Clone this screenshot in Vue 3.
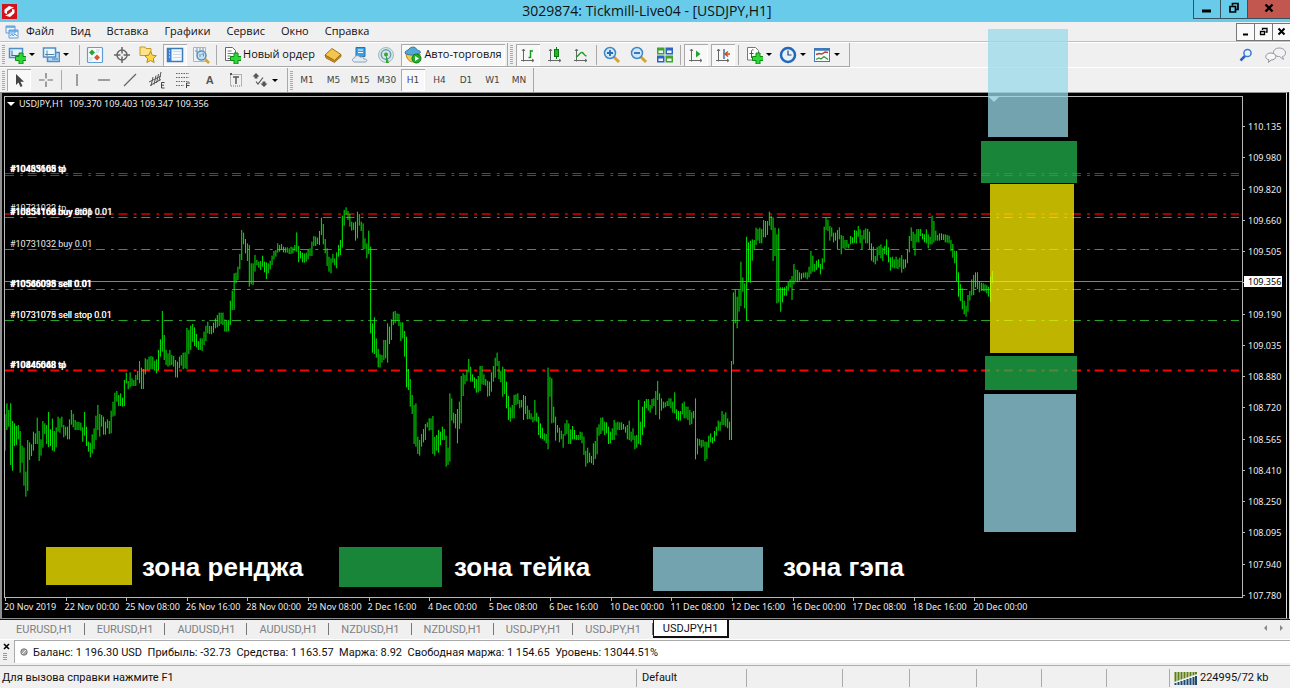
<script setup>
import { computed } from 'vue'

const menus = ['Файл', 'Вид', 'Вставка', 'Графики', 'Сервис', 'Окно', 'Справка']
const frames = ['M1', 'M5', 'M15', 'M30', 'H1', 'H4', 'D1', 'W1', 'MN']
const tabs = ['EURUSD,H1', 'EURUSD,H1', 'AUDUSD,H1', 'AUDUSD,H1', 'NZDUSD,H1', 'NZDUSD,H1', 'USDJPY,H1', 'USDJPY,H1', 'USDJPY,H1']
const prices = ['110.135', '109.980', '109.820', '109.660', '109.505', '', '109.190', '109.035', '108.880', '108.720', '108.565', '108.410', '108.250', '108.095', '107.940', '107.780']
const times = ['20 Nov 2019', '22 Nov 00:00', '25 Nov 08:00', '26 Nov 16:00', '28 Nov 00:00', '29 Nov 08:00', '2 Dec 16:00', '4 Dec 00:00', '5 Dec 08:00', '6 Dec 16:00', '10 Dec 00:00', '11 Dec 08:00', '12 Dec 16:00', '16 Dec 00:00', '17 Dec 08:00', '18 Dec 16:00', '20 Dec 00:00']

const plus = '<path d="M11 7h4v3.500h3.500v4h-3.500v3.500h-4v-3.500h-3.500v-4h3.500z" fill="#2fd83a" stroke="#0b8a14"/>'
const axes = '<path d="M4.500 3v12.500M2 14.500h13M3 5l1.500-2 1.500 2M13 13l2 1.500-2 1.500" fill="none" stroke="#666"/>'
const icons = {
  newchart: '<path d="M1.500 2.500h13v9h-13z" fill="#e3f1fc" stroke="#4a90cc" stroke-width="1.500"/><path d="M4 4.500v5.500M3.500 9.500h8" stroke="#3c6f9c" fill="none"/>' + plus,
  profiles: '<path d="M5.500 6.500h12v9h-12z" fill="#b9d8f2" stroke="#4a90cc" stroke-width="1.500"/><path d="M1.500 2h12v9h-12z" fill="#f0f8ff" stroke="#4a90cc" stroke-width="1.500"/><path d="M3 8.500h9M5 4.500v5.500" stroke="#5a7f9f"/><path d="M10 13h6" stroke="#3c7ab8"/>',
  market: '<rect x="1.500" y="1.500" width="15" height="15" rx="1" fill="#f7fbff" stroke="#5d9fd6" stroke-width="1.200"/><path d="M6 3.500l3 3-3 3-3-3z" fill="#27a537"/><path d="M11 8.500l3 3-3 3-3-3z" fill="#e2532b"/><path d="M10 4h4M10 6h3M3 12h4M3 14h3" stroke="#c5d6e5"/>',
  target: '<circle cx="9" cy="9" r="5" fill="none" stroke="#666" stroke-width="1.500"/><path d="M9 1v6.500M9 10.500v6.500M1 9h6.500M10.500 9h6.500" stroke="#666" stroke-width="1.500"/>',
  favs: '<path d="M1 2v-1h5l1 1.500h5v7h-11z" fill="#ffe28a" stroke="#c59a2c"/><path d="M11.500 5.500l1.800 3.700 4 .5-3 2.800.8 4-3.600-2-3.600 2 .8-4-3-2.800 4-.5z" fill="#ffd84a" stroke="#b98a18"/>',
  nav: '<rect x="1.500" y="2.500" width="15" height="13" fill="#f4faff" stroke="#3c7ab8" stroke-width="1.500"/><path d="M2 3h3.500v12h-3.500z" fill="#3f7fd0"/><path d="M7 5.500h8M7 8.500h8M7 11.500h8" stroke="#cbd9e6"/><path d="M3 5h1M3 8h1M3 11h1" stroke="#fff"/>',
  tester: '<path d="M1.500 1.500h12v14h-12z" fill="#eef3f6" stroke="#a9b6c0"/><path d="M3 5h2v3M5 2v4M8 2v3M11 2v3" fill="none" stroke="#7895ad"/><circle cx="9.500" cy="9.500" r="4.500" fill="#b9dcf3" fill-opacity=".8" stroke="#5c8fb8" stroke-width="1.500"/><path d="M8 11v-3M9.500 8.500l2-1v3" stroke="#6a93b6" fill="none"/><path d="M13 13l4 4" stroke="#d9a32c" stroke-width="2.500"/>',
  order: '<path d="M2.500 1.500h7l3 3v10h-10z" fill="#fff" stroke="#666"/><path d="M4.500 5h4M4.500 7.500h6M4.500 10h3M4.500 12.500h3" stroke="#777"/>' + plus,
  book: '<path d="M1 9l7-6.500 9 6-6.500 6z" fill="#f2c64c" stroke="#a87415"/><path d="M1 9l1 3 8.500 4.500 6.500-6v-2l-6.500 6z" fill="#c98f22" stroke="#946410" stroke-width=".8"/>',
  hosting: '<path d="M5 1.500h9v9h-9z" fill="#38a0e4" stroke="#1b75b7"/><path d="M7 4h5M7 6.500h5" stroke="#fff" stroke-width="1.200"/><path d="M3.500 16c-3-.5-2.500-4 0-4 .5-3 4.500-3 5.500-.8 2-1 4 .3 3.700 1.800 4-.5 4 3 1.300 3z" fill="#e4ebf2" stroke="#8da2b5"/>',
  signal: '<circle cx="9" cy="9" r="7.500" fill="#d9e8e4" stroke="#9dbdb5"/><circle cx="9" cy="8.500" r="4.700" fill="none" stroke="#6c9cc0" stroke-width="1.500"/><path d="M9 8.500l3 8.500h-3z" fill="#36a339"/><circle cx="9" cy="8.500" r="2" fill="#36a339"/>',
  auto: '<path d="M2 8c1 9 9 10 13 5l1-5z" fill="#f3c84b" stroke="#b58a20"/><path d="M1 7c0-3 3-2 4-4 2-2.500 6-2.500 7.500 0 .5 2 4 1 4 3.500-3 3-12 3.500-15.500.5z" fill="#54a8d8" stroke="#2c79ac"/><circle cx="12.500" cy="12.500" r="4.500" fill="#1fb02c" stroke="#0e7d18"/><path d="M11 10l4 2.500-4 2.500z" fill="#fff"/>',
  bars: axes + '<path d="M11.500 4v8M9.500 11.500h2M11.500 5h2.500" fill="none" stroke="#1a9a25" stroke-width="1.500"/>',
  candles: axes + '<path d="M10.500 1v12" stroke="#0b7a12"/><rect x="8.500" y="3.500" width="4" height="7" fill="#1fb52c" stroke="#0b7a12"/>',
  line: axes + '<path d="M4 11c3-1 4-5 6-4.500 2 .5 2 3 4.500 3.500" fill="none" stroke="#1a9a25" stroke-width="1.300"/>',
  zoomin: '<path d="M10.500 10.500l5.500 5.500" stroke="#d6a32d" stroke-width="3"/><circle cx="7" cy="7" r="5.500" fill="#cfe9fb" stroke="#3f87c6" stroke-width="1.500"/><path d="M4 7h6M7 4v6" stroke="#2a6db0" stroke-width="1.800"/>',
  zoomout: '<path d="M10.500 10.500l5.500 5.500" stroke="#d6a32d" stroke-width="3"/><circle cx="7" cy="7" r="5.500" fill="#cfe9fb" stroke="#3f87c6" stroke-width="1.500"/><path d="M4 7h6" stroke="#2a6db0" stroke-width="1.800"/>',
  tiles: '<path d="M1 1.500h7.500v7h-7.500zM9.500 9.500h7.500v7h-7.500z" fill="#41a52c"/><path d="M9.500 1.500h7.500v7h-7.500zM1 9.500h7.500v7h-7.500z" fill="#2c62c4"/><path d="M2.500 4.500h4.500v2.500h-4.500zM11 4.500h4.500v2.500h-4.500zM2.500 12.500h4.500v2.500h-4.500zM11 12.500h4.500v2.500h-4.500z" fill="#e8f4fc"/>',
  scroll: axes + '<path d="M9 4.500l4.500 3.500-4.500 3.500z" fill="#1fa52b"/>',
  shift: axes + '<path d="M10 3v10" stroke="#3877b3" stroke-width="1.500"/><path d="M16 8h-4M14 5.500l-3 2.500 3 2.500" stroke="#d14a20" stroke-width="1.500" fill="none"/>',
  indicators: '<path d="M2.500 1.500h8l3 3v9.500h-11z" fill="#fff" stroke="#777"/><path d="M8.500 4c-2-.8-2 1-2 2v6M4.500 7.500h4" fill="none" stroke="#555"/>' + plus,
  clock: '<circle cx="9" cy="9" r="7" fill="#e4f2fc" stroke="#2169b8" stroke-width="2.500"/><path d="M9 4.500v4.500h3.500" fill="none" stroke="#345" stroke-width="1.200"/>',
  template: '<rect x="1.500" y="2.500" width="15" height="13" fill="#f7fbff" stroke="#3c7ab8"/><path d="M1.500 3.500h15" stroke="#3c7ab8" stroke-width="2.500"/><path d="M3 8.500l3-1 3 .5 3-2 3 .5" fill="none" stroke="#b2432e" stroke-width="1.500"/><path d="M3 13.500l3-1.500 2 1 3-2.500 4 3" fill="none" stroke="#2f9b39" stroke-width="1.300"/>',
  arrow: '<path d="M6 3v11l2.500-2.500 2 4.500 2-1-2-4.300h3.500z" fill="#444"/>',
  cross: '<path d="M9 2v5.500M9 10.500v5.500M2 9h5.500M10.500 9h5.500" stroke="#666" stroke-width="1.200"/>',
  vline: '<path d="M9 3v12" stroke="#666" stroke-width="1.200"/>',
  hline: '<path d="M3 9h12" stroke="#666" stroke-width="1.200"/>',
  trend: '<path d="M3 15l12-12" stroke="#666" stroke-width="1.200"/>',
  channel: '<path d="M1 11l12-6M2 14.500l11-6M5 6l-2 9M8 4.500l-2 9M10.500 3l-2 9M13 1l-2 9" stroke="#555"/><path d="M16.500 11.500h-3v5.500h3M13.500 14.200h2.500" fill="none" stroke="#444"/>',
  fibo: '<path d="M2 2.500h13M2 6.500h13M2 10.500h13M2 14.500h8" stroke="#666" stroke-dasharray="1.500 1"/><path d="M12.500 17v-5h3.500M12.500 14.500h3" fill="none" stroke="#444"/>',
  label: '<rect x="3.500" y="3.500" width="11" height="11.500" fill="none" stroke="#777" stroke-dasharray="1 1"/><path d="M6 6h6M9 6v7" stroke="#555" stroke-width="1.500"/><path d="M3 3h2" stroke="#555" stroke-width="2"/>',
  shapes: '<path d="M5 2l3.500 3.500h-2v2h-3v-2h-2z" fill="#555"/><path d="M5 10.500l2 2.500 5-6.500" fill="none" stroke="#555" stroke-width="1.200"/><path d="M13 16l-3.500-3.500h2v-2h3v2h2z" fill="#555"/>'
}

const group = (w, items) => ({ w, items: items.map(([icon, label, opt = '']) => ({ icon, label, drop: opt.includes('d'), on: opt.includes('p'), text: opt.includes('t') })) })
const mainBar = [
  [
    group('w68', [['newchart', 'Новый график', 'd'], ['profiles', 'Профили', 'd']]),
    group('w130', [['market', 'Обзор рынка'], ['target', 'Окно данных'], ['favs', 'Избранное'], ['nav', 'Навигатор', 'p'], ['tester', 'Тестер стратегий']]),
    group('w285', [['order', 'Новый ордер', 't'], ['book', 'MetaEditor'], ['hosting', 'Хостинг'], ['signal', 'Сигналы'], ['auto', 'Авто-торговля', 'tp']])
  ],
  [
    group('w77', [['bars', 'Бары', 'p'], ['candles', 'Свечи'], ['line', 'Линия']]),
    group('w77', [['zoomin', 'Увеличить'], ['zoomout', 'Уменьшить'], ['tiles', 'Окна мозаикой']]),
    group('w51', [['scroll', 'Автопрокрутка', 'p'], ['shift', 'Сдвиг графика', 'p']]),
    group('w105', [['indicators', 'Индикаторы', 'd'], ['clock', 'Периоды', 'd'], ['template', 'Шаблоны', 'd']])
  ]
]
const drawBar = [
  group('w51', [['arrow', 'Курсор', 'p'], ['cross', 'Перекрестие']]),
  group('w220', [['vline', 'Вертикальная линия'], ['hline', 'Горизонтальная линия'], ['trend', 'Трендовая линия'], ['channel', 'Канал'], ['fibo', 'Фибоначчи'], ['A', 'Текст'], ['label', 'Метка'], ['shapes', 'Стрелки', 'd']])
]

const levels = [
  { y: 76.5, c: 'red' }, { y: 78.5, c: 'red' }, { y: 117, c: 'dark' }, { y: 120.5, c: 'green' },
  { y: 152.5, c: 'green' }, { y: 192.5, c: 'green' }, { y: 223.5, c: 'green' }, { y: 273.5, c: 'bright' }
]
const notes = [
  { k: 'n1', t: ['#10435665 sl', '#10463108 tp'] },
  { k: 'n2', t: ['#10731032 tp'] },
  { k: 'n3', t: ['#10851160 buy stop 0.01', '#10854168 buy 0.01'] },
  { k: 'n4', t: ['#10731032 buy 0.01'] },
  { k: 'n5', t: ['#10546035 sell 0.01', '#10566098 sell 0.01'] },
  { k: 'n6', t: ['#10731078 sell stop 0.01', '#10731075 sell stop 0.01'] },
  { k: 'n7', t: ['#10445668 tp', '#10846048 sl'] }
]

/* Hourly high/low pairs in thirds of a pixel; x runs evenly between from and to. */
const runs = [
  { from: 0, to: 671, y: 609, d: [342,452,310,390,330,380,310,495,363,512,370,438,378,435,375,418,393,518,437,488,443,557,515,590,420,573,427,480,433,468,395,452,400,432,353,432,393,483,418,467,363,443,370,402,375,432,336,441,388,438,356,452,393,455,382,442,350,395,355,398,350,382,375,412,380,407,380,418,358,418,330,374,342,382,360,390,365,390,366,390,368,392,382,425,336,407,380,438,425,455,428,472,403,460,385,447,347,420,315,390,342,410,345,380,350,404,365,404,358,385,363,402,332,400,305,350,278,347,273,305,285,318,280,318,293,320,240,318,218,250,243,268,217,262,235,258,240,258,225,258,213,240,183,250,203,267,207,267,175,223,178,210,170,210,168,208,170,208,182,212,178,220,150,210,118,170,33,155,105,180,150,195,160,200,150,197,165,195,168,200,180,232,185,233,170,205,165,197,158,208,157,205,84,207,90,162,77,150,72,125,82,138,102,142,123,150,115,150,115,153,95,135,77,123,65,100,78,102,78,103,68,98,55,85,45,82,38,78,38,72,38,75,58,95,62,95,60,93] },
  { from: 676, to: 972, y: -21, d: [632,705,602,660,550,660,548,580,530,570,492,538,420,510,428,463,447,490,460,513,465,590,520,583,520,585,495,545,510,525,515,533,513,540,497,530,515,547,517,567,520,550,512,538,497,525,483,508,480,500,460,488,465,485,462,480,470,487,472,488,472,488,475,492,470,492,472,490,465,482,427,485,468,517,483,505,488,517,490,518,488,515,478,508,475,498,455,498,438,468,440,468,443,462,423,465,383,435,402,463,447,490,475,528,500,545] },
  { from: 978, to: 1901, y: 249, d: [235,280,222,248,235,256,217,265,195,230,180,225,107,203,90,137,82,105,93,120,102,140,125,152,128,150,125,182,95,175,102,137,125,153,130,208,175,207,190,235,152,222,200,460,430,518,412,522,475,533,507,562,523,562,525,548,480,540,480,535,430,548,440,492,418,480,395,435,393,430,400,423,402,438,427,483,427,475,453,530,470,622,567,630,597,680,645,702,675,792,670,800,770,822,780,827,762,800,747,787,732,780,727,742,715,752,715,750,708,822,770,827,765,812,750,818,755,795,740,780,747,780,767,860,803,855,640,845,655,722,698,730,702,745,687,790,665,747,588,730,580,648,585,613,570,603,537,577,560,605,583,605,592,625,597,638,588,637,558,633,558,613,583,615,597,617,602,650,605,648,577,635,558,605,533,593,518,558,543,597,572,607,560,650,567,642,605,685,648,720,682,725,675,715,645,715,643,675,640,672,660,685,660,682,645,720,648,702,677,718,690,717,700,718,710,727,660,722,698,725,710,765,730,775,743,777,760,782,762,790,563,808,590,650,595,730,680,728,710,782,735,758,743,787,752,778,762,803,730,767,720,762,730,792,748,792,738,778,750,778,765,780,765,780,755,780,757,790,770,825,812,860,803,850,818,847,828,850,790,855,783,837,742,823,733,767,713,762,712,752,725,765,727,760,740,792,755,790,745,780,720,780,728,765,725,750,727,750,727,750,732,748,740,758,735,778,722,780,755,785,745,780,767,808,765,803,660,792] },
  { from: 1907, to: 2923, y: 249, d: [725,795,680,765,663,742,657,685,657,692,675,698,657,685,655,678,633,705,603,660,640,718,655,692,665,685,667,682,663,678,655,678,655,685,665,698,637,700,688,718,693,722,693,722,670,703,665,715,680,715,680,720,690,735,697,732,693,715,655,838,775,823,777,797,780,803,780,800,785,843,785,837,767,803,760,787,772,790,753,783,740,767,722,752,725,752,693,735,703,735,697,740,715,745,725,780,543,780,337,553,328,430,350,445,330,395,245,378,292,335,310,385,170,423,187,303,182,308,178,242,180,210,143,195,147,182,143,190,147,190,120,172,123,172,123,165,95,137,107,150,112,243,143,228,163,370,145,367,322,395,322,367,322,347,318,347,303,332,298,322,288,360,252,313,268,303,270,307,277,302,280,298,278,293,277,293,277,298,260,292,213,282,227,275,252,275,242,270,238,263,252,283,235,267,140,247,112,150,120,153,138,182,142,170,158,187,158,182,150,208,142,178,165,223,168,205,180,208,180,203,192,205,168,193,172,190,150,188,152,190,138,170,148,190,165,207,150,178,145,190,147,190,155,208,190,242,200,247,228,253,202,243,198,225,193,235,203,243,198,222,178,225,202,247,232,272,230,262,238,265,230,265,238,267,233,262,225,278,238,267,238,263,210,250,168,217,142,183,155,205,162,227,147,187,147,187,147,168,160,178,163,187,148,190,163,205,170,193,107,193,123,187,152,182,165,182,160,182,160,180,163,180,163,187,165,188,167,190,180,213,192,233,212,250,213,303,277,350,312,363,325,388,362,403,377,410,345,395,333,362,298,347,285,345,277,322,277,327,303,337] },
  { from: 2929, to: 2962, y: 99, d: [458,483,460,483,463,485,466,490,470,500,440,515,423,460] }
]
const barPath = computed(() => runs.map(r => {
  const n = r.d.length / 2
  let p = ''
  for (let i = 0; i < n; i++) {
    const x = r.from + (r.to - r.from) * i / (n - 1)
    p += `M${x.toFixed(1)} ${r.d[2 * i] + r.y}V${r.d[2 * i + 1] + r.y}`
  }
  return p
}).join(''))
</script>

<template>
  <div class="app">
    <header class="title">
      <svg class="logo" width="15" height="15" viewBox="0 0 15 15"><path d="M0 0h15v15H0z" fill="#d3121c" /><path d="M2.500 9V5.500L7 2l5 1.500L8.500 5 5 7.500V10zM12.500 5.500V9L8 13l-5-1.500L6.500 10 10 7.500V5z" fill="#fff" /></svg>
      <h1>3029874: Tickmill-Live04 - [USDJPY,H1]</h1>
      <div class="winbtns">
        <button aria-label="Свернуть"><svg width="12" height="12"><path d="M1 9h9" stroke="#000" stroke-width="3" /></svg></button>
        <button aria-label="Восстановить"><svg width="12" height="12"><path d="M2 4.500h5.500v5.500H2zM4.500 3.500V1.500h5.500v6H8" fill="none" stroke="#000" stroke-width="1.700" /></svg></button>
        <button class="close" aria-label="Закрыть"><svg width="12" height="12"><path d="M2.500 2.500l7 7M9.500 2.500l-7 7" stroke="#000" stroke-width="2.400" /></svg></button>
      </div>
    </header>

    <nav class="menu">
      <svg width="14" height="14" viewBox="0 0 14 14"><path d="M1 1h9v7H1zM4 5h9v8H4z" fill="#eaf4fc" stroke="#5a9fe0" /><path d="M1 2h9M4 6h9" stroke="#5a9fe0" stroke-width="1.500" /><path d="M5 11l2-2 1 2 2-2 2 2" fill="none" stroke="#5a9fe0" /></svg>
      <button v-for="m in menus" :key="m">{{ m }}</button>
      <div class="mdi">
        <button aria-label="Свернуть график"><svg width="9" height="9"><path d="M2 7.500h5" stroke="#000" stroke-width="2" /></svg></button>
        <button aria-label="Восстановить график"><svg width="9" height="9"><path d="M1.500 4.500h4v3h-4zM3.500 3V1.500H8v3.500H6.500" fill="none" stroke="#000" stroke-width="1.300" /></svg></button>
        <button aria-label="Закрыть график"><svg width="9" height="9"><path d="M1.500 1.500l6 6M7.500 1.500l-6 6" stroke="#000" stroke-width="2" /></svg></button>
      </div>
    </nav>

    <div class="bar">
      <div v-for="(part, pi) in mainBar" :key="pi" class="part">
        <i class="grip"></i>
        <template v-for="(g, gi) in part" :key="gi">
          <i v-if="gi" class="sep"></i>
          <div class="group" :class="g.w">
            <button v-for="b in g.items" :key="b.icon" :class="{ on: b.on, drop: b.drop, text: b.text }" :aria-label="b.label">
              <svg width="18" height="18" viewBox="0 0 18 18" v-html="icons[b.icon]"></svg>
              <span v-if="b.text">{{ b.label }}</span>
              <i v-if="b.drop" class="caret"></i>
            </button>
          </div>
        </template>
      </div>
      <div class="right">
        <button aria-label="Поиск"><svg width="14" height="14" viewBox="0 0 14 14"><path d="M1.500 12.500l5-5" stroke="#2c62c4" stroke-width="2.500" /><circle cx="8.500" cy="5" r="3.600" fill="#e9f3fc" stroke="#3d78d6" stroke-width="1.500" /></svg></button>
        <button aria-label="Сообщения"><svg width="21" height="16" viewBox="0 0 21 16"><path d="M14 1c8 0 8 8 3.500 8.500l1 3-4-3C6 9.500 7 1 14 1z" fill="#f2f2f4" stroke="#9a9aa2" /><path d="M6 6c6.500 0 6.500 7 0 7l-2.500 2.500.3-2.800C-1 12 0 6 6 6z" fill="#f7f7f9" stroke="#8e8e96" /></svg></button>
      </div>
    </div>

    <div class="bar second">
      <div class="part">
        <i class="grip"></i>
        <template v-for="(g, gi) in drawBar" :key="gi">
          <i v-if="gi" class="sep"></i>
          <div class="group" :class="g.w">
            <button v-for="b in g.items" :key="b.icon" :class="{ on: b.on, drop: b.drop }" :aria-label="b.label">
              <b v-if="b.icon === 'A'" class="letter">A</b>
              <svg v-else width="18" height="18" viewBox="0 0 18 18" v-html="icons[b.icon]"></svg>
              <i v-if="b.drop" class="caret"></i>
            </button>
          </div>
        </template>
      </div>
      <div class="part">
        <i class="grip"></i>
        <div class="group w236">
          <button v-for="f in frames" :key="f" class="frame" :class="{ on: f === 'H1' }">{{ f }}</button>
        </div>
      </div>
    </div>

    <main class="stage">
      <div class="plot">
        <svg class="canvas" width="100%" height="100%">
          <line class="price" x1="0" x2="100%" y1="184.500" y2="184.500" />
          <line v-for="l in levels" :key="l.y" class="level" :class="l.c" x1="0" x2="1234" :y1="l.y" :y2="l.y" />
          <path class="bars" transform="scale(0.33333)" :d="barPath" />
        </svg>
        <p class="quote"><i></i><span>USDJPY,H1&nbsp; 109.370 109.403 109.347 109.356</span></p>
        <div v-for="n in notes" :key="n.k" class="note" :class="n.k"><span v-for="t in n.t" :key="t">{{ t }}</span></div>
        <i class="marker"></i>
        <div class="zone gap z1"></div>
        <div class="zone take z2"></div>
        <div class="zone range z3"></div>
        <div class="zone take z4"></div>
        <div class="zone gap z5"></div>
        <div class="zone range k1"></div><strong class="t1">зона ренджа</strong>
        <div class="zone take k2"></div><strong class="t2">зона тейка</strong>
        <div class="zone gap k3"></div><strong class="t3">зона гэпа</strong>
      </div>
      <div class="prices">
        <span v-for="(p, i) in prices" :key="i">{{ p }}</span>
        <b>109.356</b>
      </div>
      <div class="times"><span v-for="t in times" :key="t">{{ t }}</span></div>
    </main>

    <div class="tabs">
      <button v-for="(t, i) in tabs" :key="i" :class="{ active: i === 8 }">{{ t }}</button>
      <div class="scrollers"><i class="l"></i><i class="r"></i></div>
    </div>

    <section class="account">
      <div class="side">
        <button aria-label="Закрыть терминал"><svg width="7" height="7"><path d="M1 1l5 5M6 1l-5 5" stroke="#000" stroke-width="1.600" /></svg></button>
        <i></i>
      </div>
      <div class="balance"><svg width="8" height="8"><circle cx="4" cy="4" r="3.200" fill="#aaa" stroke="#777" /><path d="M2 6l4-4" stroke="#eee" /></svg><span>Баланс: 1 196.30 USD&nbsp; Прибыль: -32.73&nbsp; Средства: 1 163.57&nbsp; Маржа: 8.92&nbsp; Свободная маржа: 1 154.65&nbsp; Уровень: 13044.51%</span></div>
    </section>

    <footer class="status">
      <span class="help">Для вызова справки нажмите F1</span>
      <span class="c110">Default</span><span class="c96"></span><span class="c67"></span><span class="c67"></span><span class="c65"></span><span class="c65"></span><span class="c63"></span>
      <span class="traffic">
        <svg width="23" height="13" viewBox="0 0 23 13"><path d="M1.500 0v13M4.500 0v13M7.500 0v13M10.500 0v13M13.500 0v13M16.500 0v13M19.500 0v13M22 0v13" stroke="#5f7f12" stroke-width="2" /><path d="M0 13V10L23 2v11z" fill="#efefef" /><path d="M1.500 11v2M4.500 10v3M7.500 9v4M10.500 8v5M13.500 7v6M16.500 6v7M19.500 5v8M22 4v9" stroke="#1c4a72" stroke-width="2" /></svg>
        224995/72 kb
      </span>
    </footer>
  </div>
</template>

<style>
body { margin: 0; overflow: hidden; }
</style>

<style scoped>
.app { display: flex; flex-direction: column; height: 100vh; background: #f0f0f0; color: #111; font: 11px "Open Sans", "Noto Sans", sans-serif; overflow: hidden; }
* { box-sizing: border-box; }
button { border: 0; padding: 0; margin: 0; background: none; font: inherit; color: inherit; display: flex; align-items: center; justify-content: center; white-space: nowrap; }
svg { display: block; flex: none; }
i { font-style: normal; }

.title { display: flex; align-items: center; position: relative; height: 22px; flex: none; background: #68cbea; }
.logo { margin-left: 2px; }
h1 { flex: 1; margin: 0; text-align: center; font-size: 14px; font-weight: 400; line-height: 22px; padding-left: 84px; }
.winbtns { display: flex; align-self: flex-start; height: 19px; }
.winbtns button { width: 27px; border: 1px solid #35545f; border-top: 0; border-right: 0; padding-bottom: 2px; }
.winbtns .close { width: 43px; background: #c2574f; }

.menu { display: flex; align-items: center; flex: none; height: 20px; padding-left: 5px; border-bottom: 1px solid #c0c0c0; }
.menu > button { height: 18px; margin-left: 16px; padding-bottom: 2px; }
.menu > svg { margin-right: -9px; }
.mdi { display: flex; margin-left: auto; height: 18px; }
.mdi button { width: 19px; border: 1px solid #777; margin-right: -1px; background: #fafafa; }

.bar { display: flex; flex: none; height: 25px; border-top: 1px solid #fff; }
.part { display: flex; align-items: center; padding: 0 2px; border-right: 1px solid #a8a8a8; border-bottom: 1px solid #a8a8a8; }
.second .part { border-bottom: 0; }
.grip { width: 3px; height: 19px; margin-right: 3px; background: repeating-linear-gradient(#aaa 0 1px, #f0f0f0 1px 2px); }
.second .grip { margin-right: 2px; }
.sep { width: 1px; height: 20px; margin: 0 3px; background: #aaa; }
.group { display: flex; justify-content: space-between; height: 22px; }
.w68 { width: 68px; } .w130 { width: 130px; } .w285 { width: 285px; } .w77 { width: 77px; }
.w51 { width: 51px; } .w105 { width: 105px; padding-left: 3px; } .w220 { width: 220px; } .w236 { width: 236px; }
.group button { width: 24px; height: 22px; }
.group .text { width: 98px; gap: 2px; }
.group .text span { padding-bottom: 2px; }
.group .text.on { width: 104px; }
.group .drop { width: 34px; justify-content: flex-start; gap: 3px; }
.group .on { background: #f8f8f8; box-shadow: inset 1px 1px #aaa, inset -1px -1px #fff; }
.caret { width: 0; border: 3px solid transparent; border-top-color: #000; border-bottom: 0; }
.letter { font: bold 11px "Liberation Sans", sans-serif; color: #555; }
.group .frame { font: 9px "DejaVu Sans", sans-serif; color: #444; }
.right { display: flex; align-items: center; gap: 12px; margin-left: auto; padding-right: 4px; }

.stage { flex: 1; min-height: 0; display: grid; grid-template: 1fr 19px / minmax(0, 1fr) 43px; padding: 3px 0 1px 2px; background: #000; border: solid #909090; border-width: 1px 4px 1px 2px; border-right: 4px double #ddd; color: #ececec; font: 9px/11px "Noto Sans", sans-serif; }
.plot { position: relative; border: 1px solid #b8b8b8; min-width: 0; }
.canvas { position: absolute; inset: 0; overflow: hidden; }
.bars { stroke: #0f0; stroke-width: 2.800; fill: none; }
.price { stroke: #7a8296; }
.level { stroke-dasharray: 9 6.200 2.800 4.700; stroke-width: 1; }
.red { stroke: #f00; } .dark { stroke: #a00000; stroke-width: 2; } .green { stroke: #28a428; } .bright { stroke: #f00; stroke-width: 2; }
.quote { position: absolute; left: 2px; top: 1px; margin: 0; display: flex; align-items: center; gap: 4px; }
.quote i { border: 4px solid transparent; border-top-color: #fff; border-bottom: 0; }
.note { position: absolute; left: 5px; display: grid; white-space: nowrap; font-family: Roboto, sans-serif; }
.note span { grid-area: 1 / 1; }
.n1 { top: 67px; } .n2 { top: 106px; } .n3 { top: 110px; } .n4 { top: 142px; } .n5 { top: 182px; } .n6 { top: 213px; } .n7 { top: 263px; }
.n1, .n3, .n5, .n7 { color: #fff; text-shadow: 0 0 1px #fff; }
.marker { position: absolute; left: 984px; top: 0; border: 5px solid transparent; border-top-color: #ccc; border-bottom: 0; }
.zone { position: absolute; opacity: .75; }
.gap { background: #99d9ea; } .take { background: #22b14c; } .range { background: #fff200; }
.z1 { left: 983px; top: -68px; width: 80px; height: 108px; }
.z2 { left: 976px; top: 44px; width: 96px; height: 42px; }
.z3 { left: 985px; top: 87px; width: 84px; height: 169px; }
.z4 { left: 980px; top: 259px; width: 92px; height: 34px; }
.z5 { left: 979px; top: 297px; width: 92px; height: 138px; }
.k1 { left: 41px; top: 450px; width: 86px; height: 38px; }
.k2 { left: 334px; top: 450px; width: 103px; height: 40px; }
.k3 { left: 648px; top: 450px; width: 110px; height: 44px; }
strong { position: absolute; top: 455px; font: bold 26px/30px "Liberation Sans", Arial, sans-serif; color: #fff; white-space: nowrap; }
.t1 { left: 137px; } .t2 { left: 449px; } .t3 { left: 778px; }
.prices { position: relative; grid-row: 1 / 3; grid-column: 2; display: flex; flex-direction: column; justify-content: space-between; padding: 25px 0 16px; }
.prices span { position: relative; height: 11px; padding-left: 5px; }
.prices span::before { content: ""; position: absolute; left: -1px; top: 5px; width: 3px; height: 1px; background: #b8b8b8; }
.prices b { position: absolute; left: 1px; top: 180px; width: 38px; height: 11px; padding-left: 4px; background: #fff; color: #000; font-weight: 400; }
.times { display: grid; grid-template-columns: repeat(17, 1fr); width: 1030px; }
.times span { position: relative; padding-top: 3px; white-space: nowrap; }
.times span::before { content: ""; position: absolute; left: 1px; top: 0; width: 1px; height: 3px; background: #b8b8b8; }

.tabs { display: flex; flex: none; height: 21px; padding-left: 4px; border-top: 1px solid #111; border-bottom: 1px solid #fff; color: #808080; font-family: Roboto, sans-serif; }
.tabs button { position: relative; height: 18px; padding: 0 12px; font-size: 11px; }
.tabs button:not(.active)::after { content: ""; position: absolute; right: 0; top: 3px; width: 1px; height: 12px; background: #777; }
.tabs .active { background: #fff; color: #111; border: solid #111; border-width: 0 2px 2px 1px; padding: 0 9px; }
.scrollers { display: flex; gap: 13px; align-items: center; margin-left: auto; padding-right: 7px; height: 16px; }
.scrollers i { border: 3px solid transparent; }
.scrollers .l { border-right-color: #888; border-left: 0; } .scrollers .r { border-left-color: #888; border-right: 0; }

.account { display: flex; flex: none; height: 26px; border-bottom: 1px solid #b0b0b0; padding-bottom: 2px; font-family: Roboto, sans-serif; }
.side { width: 14px; padding: 3px 0 0 3px; }
.side i { display: block; width: 4px; height: 8px; margin-top: 3px; background: repeating-linear-gradient(#999 0 1px, #f0f0f0 1px 2px); }
.balance { flex: 1; display: flex; align-items: center; gap: 5px; padding-left: 5px; background: #fff; border: solid #aaa; border-width: 1px 0 0 1px; white-space: pre; }

.status { display: flex; flex: none; height: 22px; align-items: center; padding-top: 2px; font-family: Roboto, sans-serif; }
.status span { height: 18px; line-height: 18px; padding-left: 5px; border-left: 1px solid #aaa; white-space: nowrap; }
.status .help { flex: 1; padding-left: 2px; border: 0; }
.c110 { width: 110px; } .c96 { width: 96px; } .c67 { width: 67px; } .c65 { width: 65px; } .c63 { width: 63px; }
.status .traffic { display: flex; align-items: center; gap: 3px; width: 121px; padding-left: 4px; }
</style>
